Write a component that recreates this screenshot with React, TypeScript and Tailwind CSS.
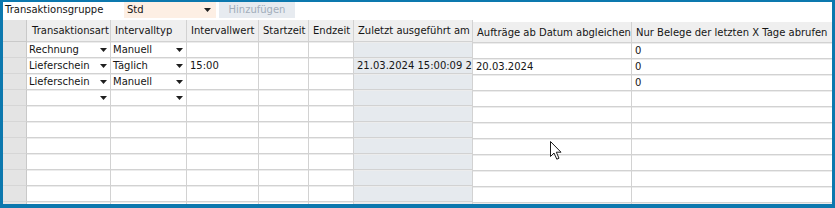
import React from 'react'

type Row = {
  art: string
  typ: string
  wert: string
  zul: string
  auf: string
  nur: string
  arrows: boolean
}

const ROWS: Row[] = [
  { art: 'Rechnung', typ: 'Manuell', wert: '', zul: '', auf: '', nur: '0', arrows: true },
  { art: 'Lieferschein', typ: 'Täglich', wert: '15:00', zul: '21.03.2024 15:00:09 20.03.2024', auf: '20.03.2024', nur: '0', arrows: true },
  { art: 'Lieferschein', typ: 'Manuell', wert: '', zul: '', auf: '', nur: '0', arrows: true },
  { art: '', typ: '', wert: '', zul: '', auf: '', nur: '', arrows: true },
  ...Array.from({ length: 7 }, () => ({ art: '', typ: '', wert: '', zul: '', auf: '', nur: '', arrows: false })),
]

function Arrow() {
  return (
    <svg width="7" height="4" viewBox="0 0 7 4" className="shrink-0">
      <polygon points="0,0 7,0 3.5,4" fill="#1f1f1f" />
    </svg>
  )
}

const cell = 'border-r border-b border-[#d2d2d2] shadow-[inset_0_1px_0_#ececec] overflow-hidden whitespace-nowrap'
const head = 'border-r border-b border-[#d2d2d2] bg-[#efefef] flex items-center px-[4px] pt-[1px] whitespace-nowrap overflow-hidden'

export default function App() {
  return (
    <div
      className="h-[208px] w-[835px] bg-[#0c78ae] pt-[2px] pl-[3px] pr-[3px] pb-[4px] text-[10px] leading-none text-[#151515]"
      style={{ fontFamily: '"DejaVu Sans", Verdana, sans-serif' }}
    >
      <div className="relative flex h-full w-full flex-col overflow-hidden bg-white">
        {/* toolbar */}
        <div className="flex h-[16px] shrink-0 items-stretch">
          <div className="flex w-[121px] items-center pl-[2px]">Transaktionsgruppe</div>
          <div className="flex w-[92px] items-center justify-between bg-[#fdefe4] pl-[3px] pr-[5px]">
            <span>Std</span>
            <Arrow />
          </div>
          <div className="ml-[3px] flex w-[76px] items-center justify-center bg-[#e7ebf0] text-[#a2adba]">
            Hinzufügen
          </div>
        </div>
        <div className="h-[2px] shrink-0" />

        {/* table */}
        <div className="flex min-h-0 flex-1">
          {/* frozen part */}
          <div className="grid w-[470px] shrink-0 grid-rows-[22px] auto-rows-[16px] grid-cols-[24px_84px_76px_72px_50px_45px_119px] content-start">
            <div className="border-r border-b border-[#c9c9c9] bg-[#e4e4e4]" />
            <div className={`${head} pl-[5px]`}>Transaktionsart</div>
            <div className={head}>Intervalltyp</div>
            <div className={head}>Intervallwert</div>
            <div className={head}>Startzeit</div>
            <div className={head}>Endzeit</div>
            <div className={head}>Zuletzt ausgeführt am</div>
            {ROWS.map((r, i) => (
              <React.Fragment key={i}>
                <div className="border-r border-b border-r-[#c9c9c9] border-b-[#d6d6d6] bg-[#e4e4e4]" />
                <div className={`${cell} flex items-center justify-between pl-[2px] pr-[3px]`}>
                  <span>{r.art}</span>
                  {r.arrows && <Arrow />}
                </div>
                <div className={`${cell} flex items-center justify-between pl-[2px] pr-[3px]`}>
                  <span>{r.typ}</span>
                  {r.arrows && <Arrow />}
                </div>
                <div className={`${cell} flex items-center pl-[3px]`}>{r.wert}</div>
                <div className={cell} />
                <div className={cell} />
                <div className={`${cell} flex items-center bg-[#e6eaee] pl-[3px]`}>{r.zul}</div>
              </React.Fragment>
            ))}
          </div>

          {/* scrollable part */}
          <div className="grid min-w-0 flex-1 grid-rows-[21px] auto-rows-[16px] grid-cols-[159px_200px] content-start pt-[2px]">
            <div className={head}>Aufträge ab Datum abgleichen</div>
            <div className={`${head} border-r-0`}>Nur Belege der letzten X Tage abrufen</div>
            {ROWS.map((r, i) => (
              <React.Fragment key={i}>
                <div className={`${cell} flex items-center pl-[3px]`}>{r.auf}</div>
                <div className={`${cell} flex items-center border-r-0 pl-[3px]`}>{r.nur}</div>
              </React.Fragment>
            ))}
          </div>
        </div>

        {/* mouse pointer */}
        <svg
          width="12"
          height="19"
          viewBox="0 0 12 19"
          className="pointer-events-none absolute left-[547px] top-[139px]"
        >
          <path
            d="M0.5 0.5 L0.5 15.5 L4 12 L6.8 18.2 L9 17.2 L6.3 11.2 L11 11.2 Z"
            fill="#ffffff"
            stroke="#1a1a1a"
            strokeWidth="1"
            strokeLinejoin="miter"
          />
        </svg>
      </div>
    </div>
  )
}
